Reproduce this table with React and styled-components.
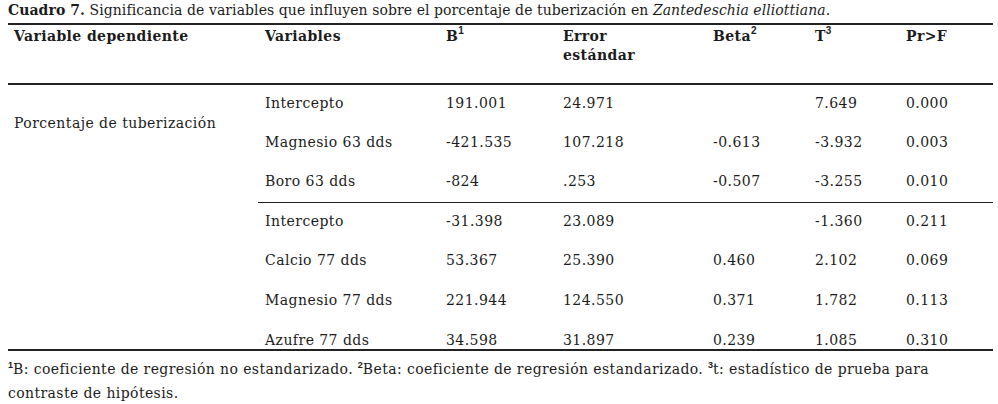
import React from 'react'
import styled, { createGlobalStyle } from 'styled-components'

const Global = createGlobalStyle`
  html, body { margin: 0; padding: 0; background: #fff; }
  body { font-family: "DejaVu Serif", "Liberation Serif", serif; color: #1c1c1c; }
`

const Page = styled.div`
  width: 998px;
  height: 404px;
  padding: 0 5px 0 8px;
  box-sizing: border-box;
  overflow: hidden;
`

const Caption = styled.div`
  font-size: 14px;
  line-height: 21px;
  height: 23px;
  letter-spacing: 0.07px;
  white-space: nowrap;
  b { font-weight: bold; }
  i { font-style: italic; }
`

const Table = styled.table`
  width: 985px;
  border-collapse: collapse;
  table-layout: fixed;
  font-size: 14px;
  letter-spacing: 0.45px;
  border-top: 2px solid #222;
  border-bottom: 2px solid #222;
`

const HeadCell = styled.th`
  text-align: left;
  vertical-align: top;
  font-weight: bold;
  letter-spacing: 0.4px;
  padding: 2px 0 0 ${p => p.$pad || 7}px;
  height: 60px;
  box-sizing: border-box;
  line-height: 19px;
  border-bottom: 2px solid #222;
`

const Cell = styled.td`
  padding: ${p => p.$last ? '10px 0 0' : '0 0 3px'};
  padding-left: ${p => p.$pad || 7}px;
  height: ${p => p.$last ? 'auto' : '39.5px'};
  box-sizing: border-box;
  vertical-align: ${p => p.$last ? 'top' : 'middle'};
  line-height: 18px;
  white-space: nowrap;
  border-top: ${p => p.$rule ? '1.5px solid #222' : 'none'};
`

const Sup = styled.sup`
  font-family: "Liberation Sans", Arial, sans-serif;
  font-size: ${p => p.$big ? 10 : 9}px;
  font-weight: bold;
  letter-spacing: 0;
  vertical-align: ${p => p.$big ? 7 : 6}px;
  line-height: 0;
`

const Notes = styled.div`
  font-size: 14px;
  line-height: 24px;
  letter-spacing: 0.4px;
  padding-top: 6px;
`

const widths = [250, 181, 117, 150, 102, 91, 94]

const group1 = [
  ['Intercepto', '191.001', '24.971', '', '7.649', '0.000'],
  ['Magnesio 63 dds', '-421.535', '107.218', '-0.613', '-3.932', '0.003'],
  ['Boro 63 dds', '-824', '.253', '-0.507', '-3.255', '0.010'],
]

const group2 = [
  ['Intercepto', '-31.398', '23.089', '', '-1.360', '0.211'],
  ['Calcio 77 dds', '53.367', '25.390', '0.460', '2.102', '0.069'],
  ['Magnesio 77 dds', '221.944', '124.550', '0.371', '1.782', '0.113'],
  ['Azufre 77 dds', '34.598', '31.897', '0.239', '1.085', '0.310'],
]

const App = () => {
  return (
    <Page>
      <Global />
      <Caption>
        <b>Cuadro 7.</b> Significancia de variables que influyen sobre el porcentaje de tuberización en <i>Zantedeschia elliottiana</i>.
      </Caption>
      <Table>
        <colgroup>
          {widths.map((w, i) => <col key={i} style={{ width: w }} />)}
        </colgroup>
        <thead>
          <tr>
            <HeadCell $pad={6}>Variable dependiente</HeadCell>
            <HeadCell>Variables</HeadCell>
            <HeadCell>B<Sup $big>1</Sup></HeadCell>
            <HeadCell>Error<br />estándar</HeadCell>
            <HeadCell>Beta<Sup $big>2</Sup></HeadCell>
            <HeadCell>T<Sup $big>3</Sup></HeadCell>
            <HeadCell>Pr&gt;F</HeadCell>
          </tr>
        </thead>
        <tbody>
          {group1.map((row, r) => (
            <tr key={'a' + r}>
              {r === 0 && <Cell $pad={6} rowSpan={2}>Porcentaje de tuberización</Cell>}
              {r === 2 && <Cell />}
              {row.map((v, c) => <Cell key={c}>{v}</Cell>)}
            </tr>
          ))}
          {group2.map((row, r) => {
            const last = r === group2.length - 1
            return (
              <tr key={'b' + r}>
                <Cell $last={last} />
                {row.map((v, c) => (
                  <Cell key={c} $rule={r === 0} $last={last}>{v}</Cell>
                ))}
              </tr>
            )
          })}
        </tbody>
      </Table>
      <Notes>
        <Sup>1</Sup>B: coeficiente de regresión no estandarizado. <Sup>2</Sup>Beta: coeficiente de regresión estandarizado. <Sup>3</Sup>t: estadístico de prueba para<br />
        contraste de hipótesis.
      </Notes>
    </Page>
  )
}

export default App
